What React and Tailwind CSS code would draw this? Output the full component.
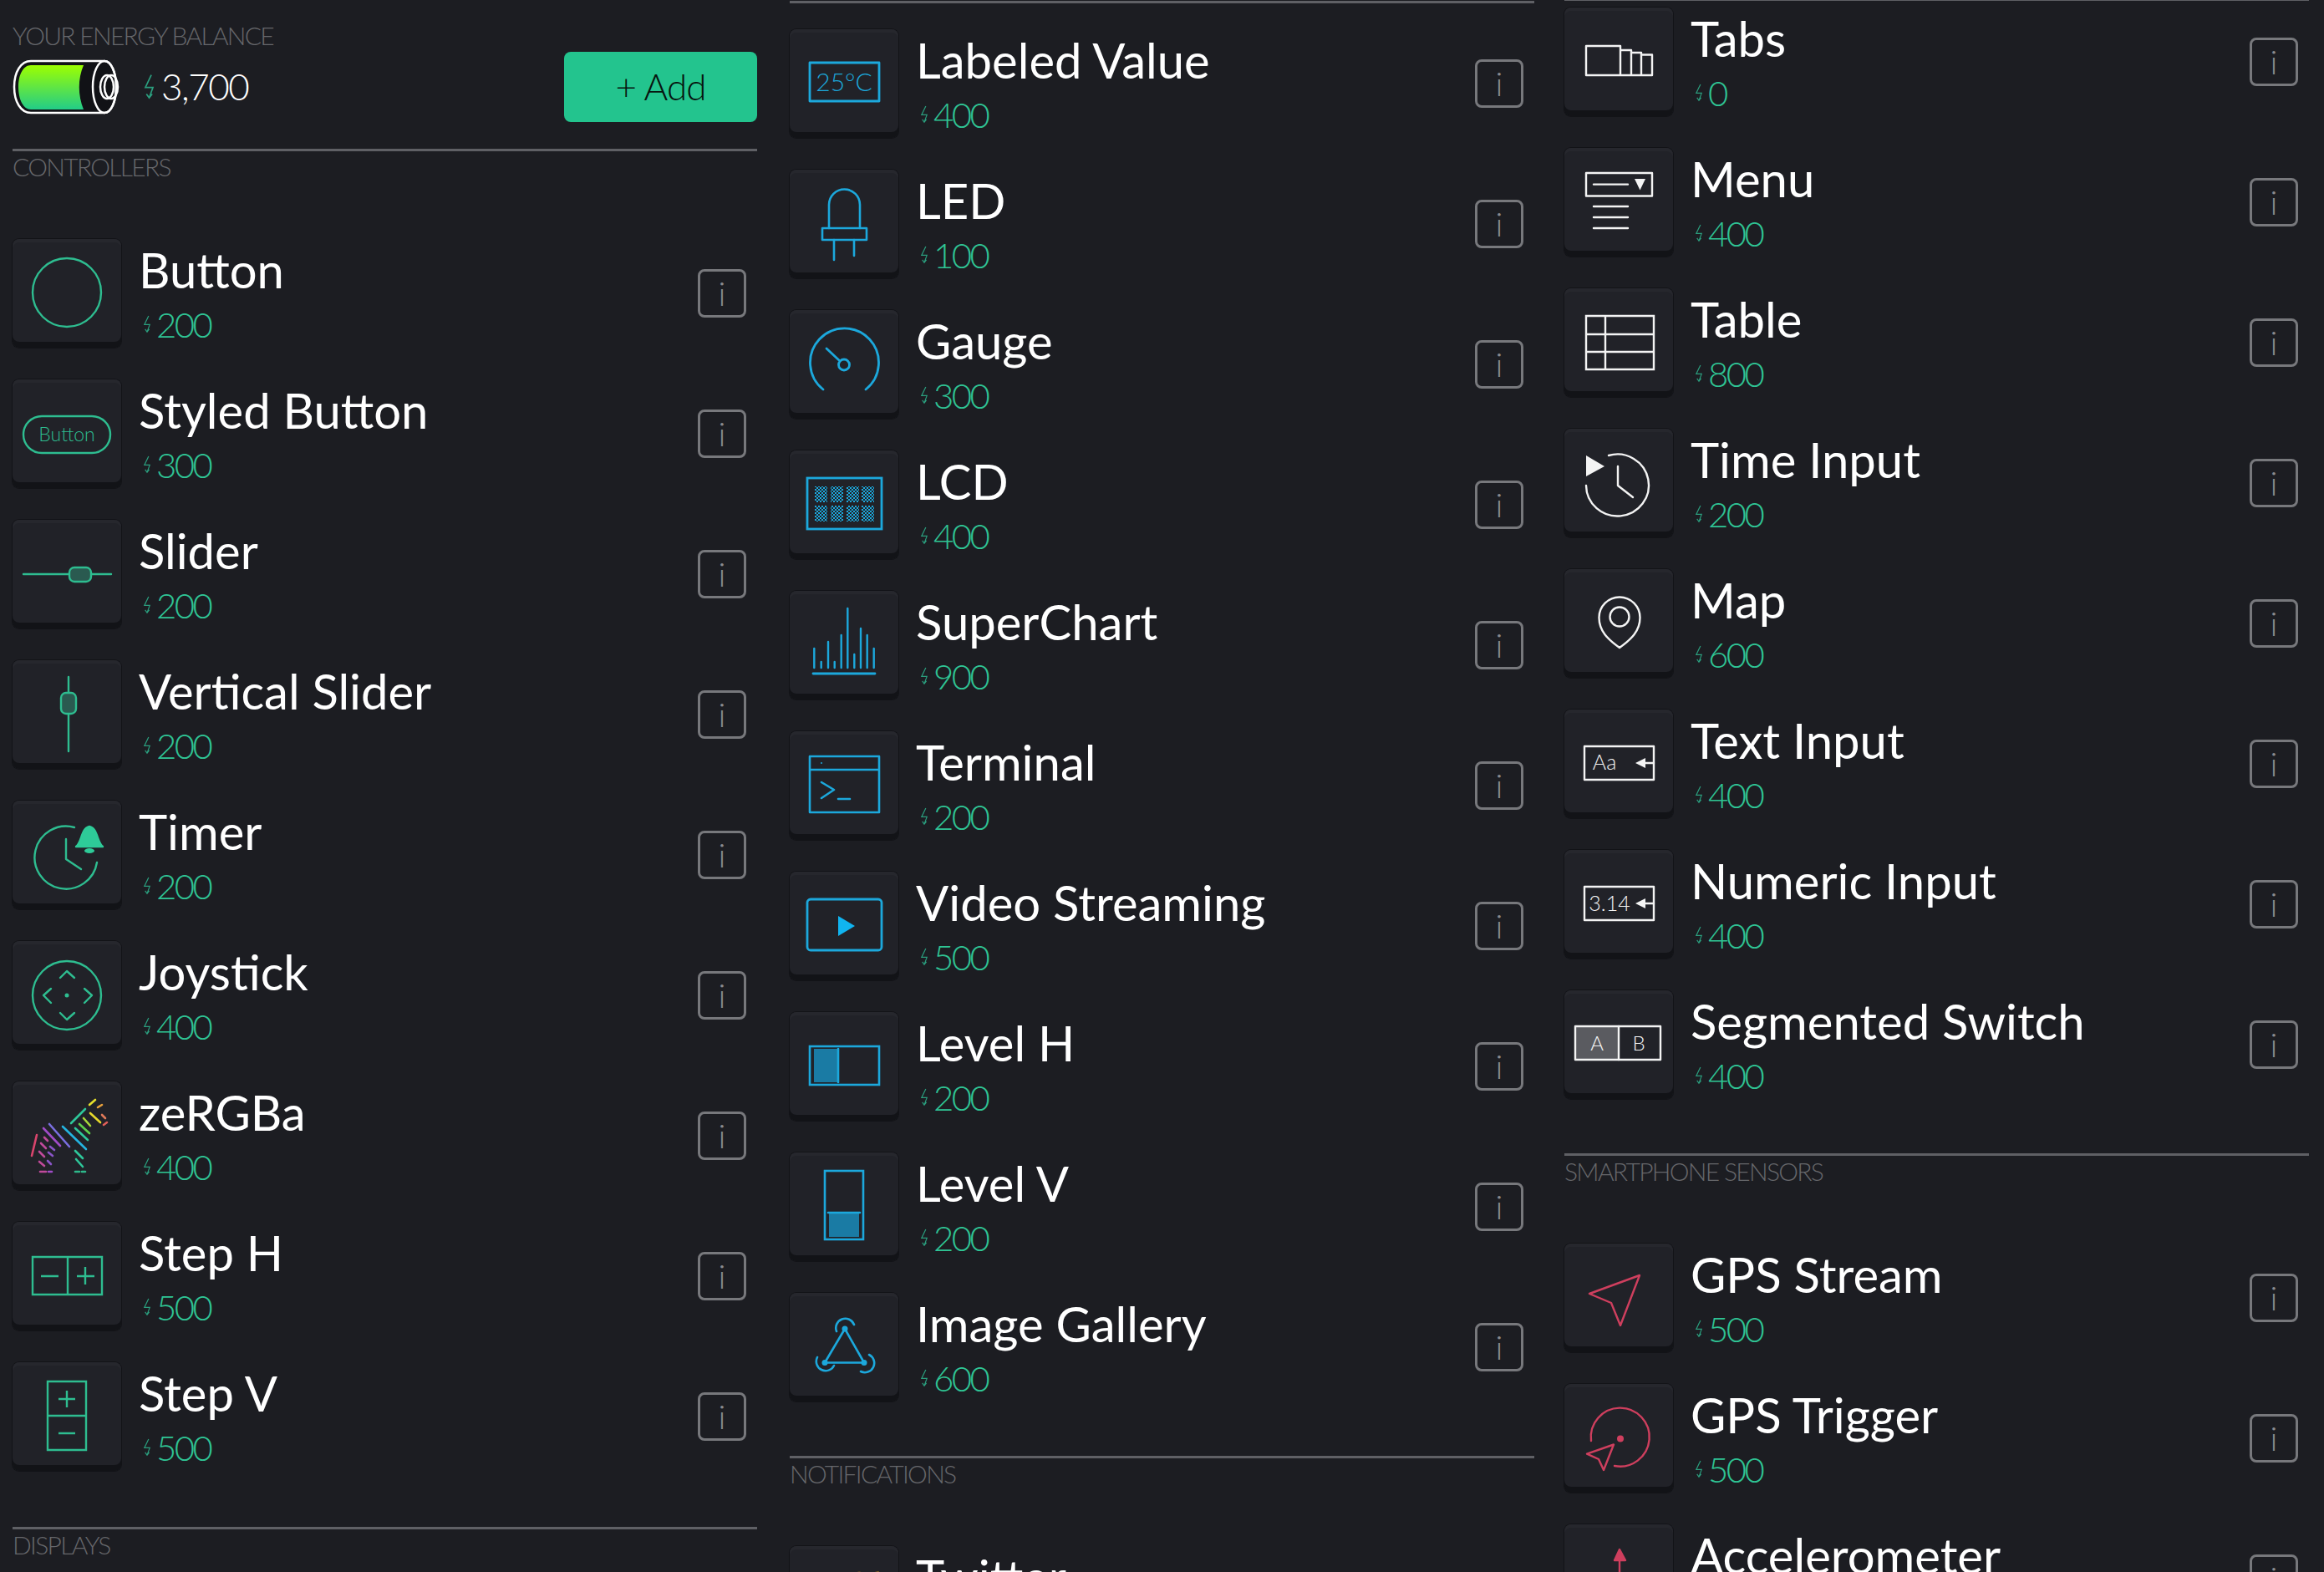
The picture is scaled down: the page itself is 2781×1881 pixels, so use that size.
import React from "react";

const GREEN = "#2ebd90";
const BLUE = "#1ca8dc";
const WHITE = "#f4f4f4";
const RED = "#cf3f5e";

const Ico = ({ color, sw = 2.4, children }) => (
  <svg
    width="130"
    height="130"
    viewBox="0 0 130 130"
    fill="none"
    stroke={color}
    strokeWidth={sw}
    strokeLinecap="round"
    strokeLinejoin="round"
    className="block"
  >
    {children}
  </svg>
);

const Label = ({ x, y, size, color, children }) => (
  <text
    x={x}
    y={y}
    fontSize={size}
    fill={color}
    stroke="none"
    textAnchor="middle"
    fontFamily="Lato, sans-serif"
    fontWeight="300"
  >
    {children}
  </text>
);

const zebra = [
  [29, 64, 23, 89, "#d8456c"],
  [37, 56, 57, 77, "#a04cc8"],
  [44, 51, 68, 78, "#7a6fe0"],
  [60, 54, 88, 81, "#25b4e0"],
  [75, 56, 90, 70, "#2ec79a"],
  [80, 51, 92, 62, "#5ed04c"],
  [85, 44, 93, 53, "#a8d83a"],
  [70, 50, 87, 33, "#2ec79a"],
  [92, 28, 99, 22, "#e6e02c"],
  [102, 31, 107, 28, "#e8a13c"],
  [93, 38, 105, 49, "#e6d82c"],
  [107, 40, 111, 44, "#e07a5a"],
  [109, 52, 113, 49, "#e0605a"],
  [75, 83, 84, 92, "#2ec79a"],
  [76, 93, 84, 102, "#2ec79a"],
  [75, 108, 80, 108, "#2eb88a"],
  [83, 108, 87, 108, "#2eb88a"],
  [38, 67, 42, 71, "#c04a9a"],
  [34, 74, 40, 80, "#c04a9a"],
  [32, 84, 38, 90, "#c04a9a"],
  [32, 96, 38, 101, "#c04a9a"],
  [33, 108, 40, 108, "#c04a9a"],
  [43, 108, 47, 108, "#a04cc8"],
  [45, 78, 50, 82, "#8a55c8"],
  [43, 85, 48, 89, "#8a55c8"],
  [42, 95, 46, 99, "#8a55c8"],
];

const icons = {
  button: (
    <Ico color={GREEN}>
      <circle cx="65" cy="64" r="41" />
    </Ico>
  ),
  styled: (
    <Ico color={GREEN}>
      <rect x="13" y="44" width="104" height="44" rx="22" />
      <Label x="65" y="74" size="23" color={GREEN}>Button</Label>
    </Ico>
  ),
  slider: (
    <Ico color={GREEN}>
      <path d="M13 65H68M94 65H118" />
      <rect x="68" y="57" width="26" height="17" rx="6" fill="#2a5a50" />
    </Ico>
  ),
  vslider: (
    <Ico color={GREEN}>
      <path d="M67 20V39M67 64V109" />
      <rect x="58" y="39" width="18" height="25" rx="6" fill="#2a5a50" />
    </Ico>
  ),
  timer: (
    <Ico color={GREEN}>
      <path d="M74 32A37.5 37.5 0 1 0 101 74" />
      <path d="M64 46V70L82 82" />
      <path d="M76 55C83 50 82 33 92 31C102 33 101 50 108 55Z" fill="#2ecb98" stroke="#2ecb98" />
      <ellipse cx="92" cy="60" rx="6" ry="3" fill="#2ecb98" stroke="none" />
    </Ico>
  ),
  joystick: (
    <Ico color={GREEN}>
      <circle cx="65" cy="65" r="41" />
      <path d="M57 44L65 36L74 44M57 86L65 94L74 86M46 57L37 65L46 74M86 57L95 65L86 74" />
      <circle cx="65" cy="65" r="2.5" fill={GREEN} stroke="none" />
    </Ico>
  ),
  zergba: (
    <Ico color={GREEN} sw={2.6}>
      {zebra.map(([x1, y1, x2, y2, c], i) => (
        <line key={i} x1={x1} y1={y1} x2={x2} y2={y2} stroke={c} />
      ))}
    </Ico>
  ),
  steph: (
    <Ico color={GREEN}>
      <path d="M24 42H107V87H24ZM66 42V87M34 65H55M87 54V75M77 65H98" strokeLinecap="butt" strokeLinejoin="miter" />
    </Ico>
  ),
  stepv: (
    <Ico color={GREEN}>
      <path d="M42 23H88V105H42ZM42 64H88M55 44H75M65 34V54M55 85H75" strokeLinecap="butt" strokeLinejoin="miter" />
    </Ico>
  ),
  labeled: (
    <Ico color={BLUE} sw={2.8}>
      <rect x="24" y="40" width="83" height="46" />
      <Label x="65" y="74" size="30" color={BLUE}>25°C</Label>
    </Ico>
  ),
  led: (
    <Ico color={BLUE} sw={2.6}>
      <path d="M47 70V42A18.5 18.5 0 0 1 84 42V70" />
      <rect x="39" y="70" width="53" height="14" />
      <path d="M53 84V108M77 84V103" />
    </Ico>
  ),
  gauge: (
    <Ico color={BLUE} sw={2.8}>
      <path d="M40 95A41 41 0 1 1 91 95" />
      <path d="M44 46L59 60" />
      <circle cx="65" cy="65.5" r="6.5" />
    </Ico>
  ),
  lcd: (
    <Ico color={BLUE} sw={2.8}>
      <defs>
        <pattern id="lcdDots" width="4" height="4" patternUnits="userSpaceOnUse">
          <rect width="2" height="2" fill={BLUE} stroke="none" />
          <rect x="2" y="2" width="2" height="2" fill={BLUE} stroke="none" />
        </pattern>
      </defs>
      <rect x="21" y="33" width="89" height="61" strokeLinecap="butt" strokeLinejoin="miter" />
      {[30, 49, 68, 86].map((x) =>
        [43, 66].map((y) => (
          <rect key={x + "-" + y} x={x} y={y} width="15" height="19" fill="url(#lcdDots)" stroke="none" />
        ))
      )}
    </Ico>
  ),
  superchart: (
    <Ico color={BLUE} sw={2.4}>
      <path d="M28 99H102" strokeWidth="2.8" />
      {[
        [29.3, 69],
        [37.7, 85],
        [46, 61],
        [53.7, 85],
        [61.7, 53],
        [69.3, 21],
        [77.3, 76],
        [85, 45],
        [92.7, 53],
        [100.7, 69],
      ].map(([x, y]) => (
        <line key={x} x1={x} y1={y} x2={x} y2="92" />
      ))}
    </Ico>
  ),
  terminal: (
    <Ico color={BLUE} sw={2.6}>
      <path d="M24 30H107V97H24ZM24 46H107M38 61L53 70L38 80M58 81H72" />
      <circle cx="38" cy="38" r="1" fill={BLUE} stroke="none" />
    </Ico>
  ),
  video: (
    <Ico color={BLUE} sw={2.8}>
      <rect x="21" y="33" width="89" height="61" rx="4" />
      <path d="M58 53L78 65L58 77Z" fill="#10b4f0" stroke="none" />
    </Ico>
  ),
  levelh: (
    <Ico color={BLUE} sw={2.6}>
      <rect x="29" y="44" width="29" height="40" fill="#1a7ba4" stroke="none" />
      <rect x="24" y="41" width="83" height="46" strokeLinecap="butt" strokeLinejoin="miter" />
      <path d="M58 44V84" />
    </Ico>
  ),
  levelv: (
    <Ico color={BLUE} sw={2.6}>
      <rect x="47" y="72" width="36" height="29" fill="#1a7ba4" stroke="none" />
      <rect x="42" y="22" width="46" height="82" strokeLinecap="butt" strokeLinejoin="miter" />
      <path d="M46 72H84" />
    </Ico>
  ),
  gallery: (
    <Ico color={BLUE} sw={2.6}>
      <path d="M66 43L42 83.5H89Z" />
      <circle cx="66" cy="43" r="3.5" fill={BLUE} stroke="none" />
      <circle cx="42" cy="83.5" r="3.5" fill={BLUE} stroke="none" />
      <circle cx="89" cy="83.5" r="3.5" fill={BLUE} stroke="none" />
      <path d="M56 46A11 11 0 0 1 77 38M33 77A11 11 0 1 0 53 87M85 94A11 11 0 0 0 95 74" />
    </Ico>
  ),
  twitter: (
    <Ico color="#e8a220" sw={3}>
      <path d="M32 38C40 52 52 58 66 58C64 40 78 28 90 34L106 32L98 44C98 72 78 92 50 92C42 92 34 90 28 86" />
    </Ico>
  ),
  tabs: (
    <Ico color={WHITE}>
      <path d="M26 46H67V81H26ZM67 51H80V81H67ZM80 54H92V81H80ZM92 56.5H105V81H92Z" />
    </Ico>
  ),
  menu: (
    <Ico color={WHITE}>
      <rect x="26" y="30" width="79" height="27.5" />
      <path d="M35 43.6H76M35 70H76M35 83H76M35 96H76" />
      <path d="M84 37H97L90.5 50.5Z" fill={WHITE} stroke="none" />
    </Ico>
  ),
  table: (
    <Ico color={WHITE}>
      <path d="M26 33H107V97H26ZM26 55H107M26 76H107M49 33V97" strokeLinejoin="miter" strokeLinecap="butt" />
    </Ico>
  ),
  timeinput: (
    <Ico color={WHITE}>
      <path d="M53 32A37.5 37 0 1 1 26 68" />
      <path d="M26 32L48 45L26 57Z" fill={WHITE} stroke="none" />
      <path d="M64 45V68L82 82" />
    </Ico>
  ),
  map: (
    <Ico color={WHITE}>
      <path d="M66 94C52 84 41.5 74 41.5 58A24.5 24.5 0 0 1 90.5 58C90.5 74 80 84 66 94Z" />
      <circle cx="66" cy="57" r="11.5" />
    </Ico>
  ),
  textinput: (
    <Ico color={WHITE}>
      <rect x="24" y="44" width="83" height="40" />
      <Label x="48" y="72" size="25" color={WHITE}>Aa</Label>
      <path d="M96 64H107" />
      <path d="M85 64L97 58V70Z" fill={WHITE} stroke="none" />
    </Ico>
  ),
  numeric: (
    <Ico color={WHITE}>
      <rect x="24" y="44" width="83" height="40" />
      <Label x="54" y="73" size="25" color={WHITE}>3.14</Label>
      <path d="M96 64H107" />
      <path d="M85 64L97 58V70Z" fill={WHITE} stroke="none" />
    </Ico>
  ),
  segment: (
    <Ico color={WHITE}>
      <rect x="14" y="44" width="51" height="38" fill="#5a5b60" stroke="none" />
      <rect x="13" y="43" width="102" height="40" />
      <path d="M65 43V83" />
      <Label x="39" y="72" size="24" color={WHITE}>A</Label>
      <Label x="89" y="72" size="24" color={WHITE}>B</Label>
    </Ico>
  ),
  gpsstream: (
    <Ico color={RED}>
      <path d="M90 38L30 60L56 71L67 98Z" />
    </Ico>
  ),
  gpstrigger: (
    <Ico color={RED}>
      <path d="M32 68A35 35 0 1 1 60 98" />
      <circle cx="67" cy="65.5" r="4" fill={RED} stroke="none" />
      <path d="M59 72.5L27 83.6L41 90L47 103Z" />
    </Ico>
  ),
  accel: (
    <Ico color={RED}>
      <path d="M66 42V90" />
      <path d="M66 30L73 43H60Z" fill={RED} stroke={RED} />
    </Ico>
  ),
};

const Bolt = ({ className }) => (
  <svg viewBox="0 0 10 24" fill="none" stroke="#2b9e7e" strokeWidth="1.3" className={className}>
    <path d="M7 1L1.5 12.5H8.5L5 22M2.5 18.5L5 22L7.8 18.5" />
  </svg>
);

const Row = ({ name, cost, icon }) => (
  <div className="flex h-[168px] items-start">
    <div className="h-[130px] w-[130px] shrink-0 rounded-[8px] bg-[#212228] shadow-[0_0_0_1px_#121317,inset_0_-7px_0_#121317,inset_0_4px_0_#26272d]">
      {icons[icon]}
    </div>
    <div className="ml-[21px] flex flex-col">
      <div className="mt-[7px] text-[58px] font-normal leading-[60px] whitespace-nowrap text-white">
        {name}
      </div>
      <div className="mt-[13px] flex items-center text-[42px] leading-[44px] font-light tracking-[-2.6px] text-[#2fc494]">
        <Bolt className="ml-[5px] mr-[6px] h-[22px] w-[10px]" />
        {cost}
      </div>
    </div>
    <div className="ml-auto mr-[13px] mt-[36px] flex h-[58px] w-[58px] items-center justify-center rounded-[8px] border-[3px] border-[#77787c] text-[40px] font-light leading-none text-[#8a8b8f]">
      i
    </div>
  </div>
);

const Section = ({ title, items, className }) => (
  <div className={className}>
    <div className="h-[3px] bg-[#5f6065]" />
    <div className="h-[105px] text-[30px] font-light leading-[36px] tracking-[-1.7px] text-[#66676b]">{title}</div>
    {items.map((it) => (
      <Row key={it.name} {...it} />
    ))}
  </div>
);

const Battery = () => (
  <svg width="128" height="68" viewBox="0 0 128 68" fill="none" className="block shrink-0">
    <defs>
      <linearGradient id="charge" x1="0" y1="0" x2="0" y2="1">
        <stop offset="0" stopColor="#9dff00" />
        <stop offset="1" stopColor="#22cc88" />
      </linearGradient>
    </defs>
    <path d="M22 3H110C118 3 124 16 124 34C124 52 118 65 110 65H22C10 65 2 52 2 34C2 16 10 3 22 3Z" fill="#111216" stroke="#fff" strokeWidth="2.5" />
    <path d="M22 8H85C78 24 78 44 85 61H22C13 61 7 49 7 34C7 19 13 8 22 8Z" fill="url(#charge)" />
    <ellipse cx="110" cy="34" rx="14" ry="31" stroke="#fff" strokeWidth="2.5" />
    <ellipse cx="113" cy="34" rx="8" ry="14" stroke="#fff" strokeWidth="2.5" />
    <ellipse cx="118" cy="34" rx="8" ry="14" stroke="#fff" strokeWidth="2.5" />
  </svg>
);

const controllers = [
  { name: "Button", cost: "200", icon: "button" },
  { name: "Styled Button", cost: "300", icon: "styled" },
  { name: "Slider", cost: "200", icon: "slider" },
  { name: "Vertical Slider", cost: "200", icon: "vslider" },
  { name: "Timer", cost: "200", icon: "timer" },
  { name: "Joystick", cost: "400", icon: "joystick" },
  { name: "zeRGBa", cost: "400", icon: "zergba" },
  { name: "Step H", cost: "500", icon: "steph" },
  { name: "Step V", cost: "500", icon: "stepv" },
];

const displays = [
  { name: "Labeled Value", cost: "400", icon: "labeled" },
  { name: "LED", cost: "100", icon: "led" },
  { name: "Gauge", cost: "300", icon: "gauge" },
  { name: "LCD", cost: "400", icon: "lcd" },
  { name: "SuperChart", cost: "900", icon: "superchart" },
  { name: "Terminal", cost: "200", icon: "terminal" },
  { name: "Video Streaming", cost: "500", icon: "video" },
  { name: "Level H", cost: "200", icon: "levelh" },
  { name: "Level V", cost: "200", icon: "levelv" },
  { name: "Image Gallery", cost: "600", icon: "gallery" },
];

const interfaces = [
  { name: "Tabs", cost: "0", icon: "tabs" },
  { name: "Menu", cost: "400", icon: "menu" },
  { name: "Table", cost: "800", icon: "table" },
  { name: "Time Input", cost: "200", icon: "timeinput" },
  { name: "Map", cost: "600", icon: "map" },
  { name: "Text Input", cost: "400", icon: "textinput" },
  { name: "Numeric Input", cost: "400", icon: "numeric" },
  { name: "Segmented Switch", cost: "400", icon: "segment" },
];

const sensors = [
  { name: "GPS Stream", cost: "500", icon: "gpsstream" },
  { name: "GPS Trigger", cost: "500", icon: "gpstrigger" },
  { name: "Accelerometer", cost: "500", icon: "accel" },
];

export default function App() {
  return (
    <div className="flex h-[1881px] overflow-hidden bg-[#1c1d22] pl-[15px] font-['Lato',sans-serif]">
      {/* Energy + controllers */}
      <div className="w-[891px] shrink-0">
        <div className="h-[178px] pt-[26px]">
          <div className="h-[32px] text-[30px] font-light leading-[32px] tracking-[-1.7px] text-[#66676b]">
            YOUR ENERGY BALANCE
          </div>
          <div className="mt-[4px] flex h-[84px] items-center">
            <Battery />
            <Bolt className="ml-[29px] h-[32px] w-[13px]" />
            <span className="ml-[8px] -mt-[2px] text-[44px] font-light tracking-[-1.5px] text-white">3,700</span>
            <button className="ml-auto h-[84px] w-[231px] rounded-[8px] bg-[#23c48e] pb-[2px] text-[44px] font-light tracking-[-1px] text-[#07140f]">
              + Add
            </button>
          </div>
        </div>
        <Section title="CONTROLLERS" items={controllers} className="pb-[29px]" />
        <Section title="DISPLAYS" items={[]} />
      </div>

      {/* Displays + notifications */}
      <div className="ml-[39px] w-[891px] shrink-0">
        <div className="h-[35px] pt-[1px]">
          <div className="h-[3px] bg-[#5f6065]" />
        </div>
        <div className="pb-[27px]">
          {displays.map((it) => (
            <Row key={it.name} {...it} />
          ))}
        </div>
        <Section title="NOTIFICATIONS" items={[{ name: "Twitter", cost: "0", icon: "twitter" }]} />
      </div>

      {/* Interface + sensors */}
      <div className="ml-[36px] w-[891px] shrink-0">
        <div className="h-[9px]">
          <div className="h-[1px] bg-[#5f6065]" />
        </div>
        <div className="pb-[27px]">
          {interfaces.map((it) => (
            <Row key={it.name} {...it} />
          ))}
        </div>
        <Section title="SMARTPHONE SENSORS" items={sensors} />
      </div>
    </div>
  );
}
